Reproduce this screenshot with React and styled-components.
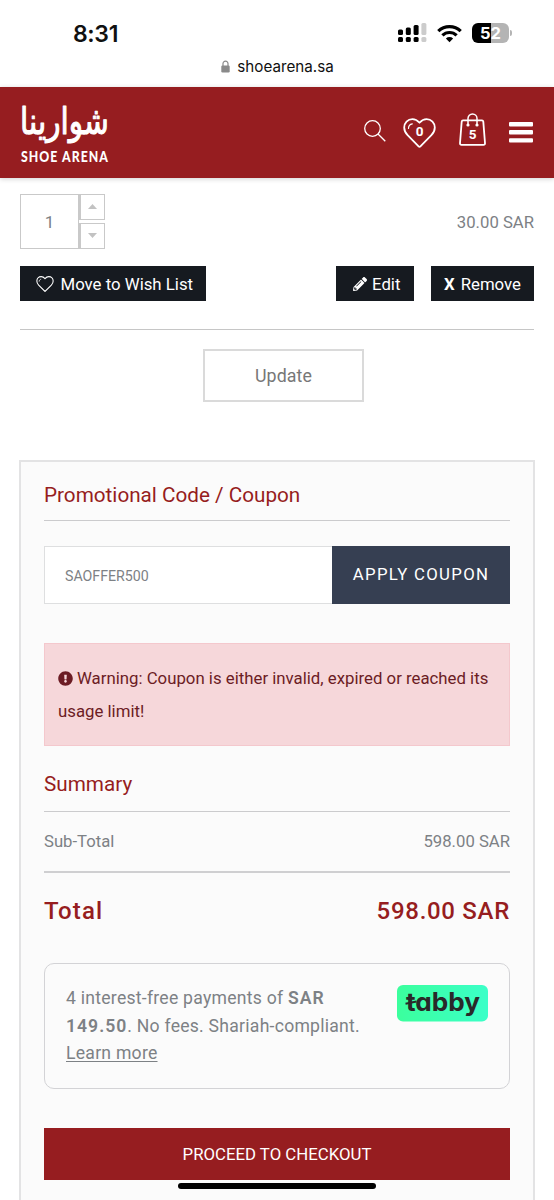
import styled, { createGlobalStyle } from "styled-components";
import { FaPencilAlt, FaExclamationCircle } from "react-icons/fa";

const GlobalStyle = createGlobalStyle`
  * {
    box-sizing: border-box;
  }
  body {
    margin: 0;
    background: #fff;
    font-family: Roboto, "Liberation Sans", sans-serif;
    color: #7d8185;
  }
  button, input {
    font-family: inherit;
    margin: 0;
  }
`;

const Page = styled.div`
  position: relative;
  width: 554px;
  height: 1200px;
  overflow: hidden;
  background: #fff;
`;

/* phone chrome */
const Chrome = styled.div`
  height: 87px;
  font-family: Inter, "Liberation Sans", sans-serif;
  color: #111;
`;
const StatusBar = styled.div`
  display: flex;
  justify-content: space-between;
  align-items: center;
  height: 55px;
  padding: 13px 42px 0 73px;
`;
const Time = styled.div`
  font-size: 23px;
  font-weight: 600;
  letter-spacing: -0.35px;
  line-height: 28px;
`;
const StatusIcons = styled.div`
  display: flex;
  align-items: center;
  gap: 10px;
  margin-top: -2px;
`;
const Battery = styled.div`
  display: flex;
  align-items: center;
  gap: 1px;
`;
const BatteryBody = styled.div`
  width: 37px;
  height: 20px;
  border-radius: 6px;
  background: linear-gradient(90deg, #000 52%, #b4b4b4 52%);
  color: #fff;
  font-size: 16.5px;
  font-weight: 700;
  line-height: 20px;
  text-align: center;
`;
const BatteryTip = styled.div`
  width: 2px;
  height: 6px;
  border-radius: 0 2px 2px 0;
  background: #b4b4b4;
`;
const AddressBar = styled.div`
  display: flex;
  justify-content: center;
  align-items: center;
  gap: 7px;
  height: 22px;
  padding-left: 1px;
  font-size: 15.2px;
`;

/* shop header */
const Header = styled.header`
  display: flex;
  justify-content: space-between;
  height: 91px;
  padding: 0 21px 0 20px;
  background: #961d20;
  box-shadow: 0 1px 5px rgba(0, 0, 0, 0.18);
`;
const HeaderIcons = styled.div`
  display: flex;
  align-items: flex-start;
  padding-top: 26px;
`;
const HeaderIcon = styled.div`
  position: relative;
  width: ${(props) => props.$width}px;
  height: 36px;
  padding-top: ${(props) => props.$top || 0}px;
  margin-left: ${(props) => props.$gap || 0}px;
  svg {
    display: block;
  }
`;
const Count = styled.span`
  position: absolute;
  left: 0;
  right: 0;
  top: ${(props) => props.$top}px;
  color: #fff;
  font-size: 13.5px;
  font-weight: 700;
  line-height: 16px;
  text-align: center;
`;

/* cart item */
const Item = styled.section`
  margin: 0 20px;
  padding-top: 16px;
  border-bottom: 1px solid #c6c6c6;
  height: 152px;
`;
const ItemRow = styled.div`
  display: flex;
  justify-content: space-between;
  align-items: center;
`;
const Quantity = styled.div`
  display: flex;
`;
const QuantityValue = styled.div`
  width: 59px;
  height: 55px;
  border: 1px solid #c9c9c9;
  font-size: 17px;
  line-height: 54px;
  text-align: center;
`;
const Steps = styled.div`
  display: flex;
  flex-direction: column;
  justify-content: space-between;
`;
const Step = styled.button`
  display: flex;
  justify-content: center;
  align-items: center;
  width: 26px;
  height: 26px;
  padding: 0 1px 2px 0;
  border: 1px solid #c9c9c9;
  border-left-width: 2px;
  background: #fff;
`;
const Price = styled.div`
  padding-top: 1px;
  font-size: 16.7px;
`;
const Actions = styled.div`
  display: flex;
  margin-top: 17px;
`;
const DarkButton = styled.button`
  display: flex;
  align-items: center;
  justify-content: flex-start;
  gap: ${(props) => props.$gap}px;
  width: ${(props) => props.$width}px;
  height: 35px;
  margin-left: ${(props) => props.$left || "0"};
  padding: 1px 0 0 ${(props) => props.$inset}px;
  border: 0;
  background: #161a20;
  color: #fff;
  font-size: 16.8px;
  white-space: nowrap;
`;
const UpdateButton = styled.button`
  display: block;
  width: 161px;
  height: 53px;
  margin: 19px auto 0 203px;
  border: 2px solid #dadada;
  background: #fff;
  color: #777;
  font-size: 17.8px;
  letter-spacing: 0.1px;
`;

/* totals card */
const Card = styled.section`
  height: 760px;
  margin: 58px 19px 0 19px;
  padding: 0 23px;
  border: 2px solid #e3e3e4;
  background: #fbfbfb;
`;
const CardTitle = styled.h2`
  margin: 0;
  height: ${(props) => props.$height}px;
  padding-top: ${(props) => props.$top}px;
  border-bottom: 1px solid #cbcbcd;
  color: #961d20;
  font-size: 20.7px;
  font-weight: 400;
  line-height: 24px;
`;
const CouponForm = styled.div`
  display: flex;
  margin-top: 25px;
  height: 58px;
`;
const CouponInput = styled.input`
  width: 288px;
  padding: 2px 20px 0;
  border: 1px solid #dedfe0;
  border-right: 0;
  border-radius: 0;
  outline: 0;
  background: #fff;
  color: #7d8185;
  font-size: 14.2px;
`;
const ApplyButton = styled.button`
  flex: 1;
  padding: 0 0 2px;
  border: 0;
  background: #363f52;
  color: #fff;
  font-size: 16.8px;
  letter-spacing: 1.3px;
`;
const Alert = styled.div`
  height: 103px;
  margin-top: 39px;
  padding: 18px 13px 0;
  border: 1px solid #f4c8cd;
  background: #f6d7da;
  color: #6c1c24;
  font-size: 16.8px;
  line-height: 32.5px;
  white-space: nowrap;
  svg {
    vertical-align: -2px;
    margin-right: 4px;
  }
`;
const TotalRow = styled.div`
  display: flex;
  justify-content: space-between;
  align-items: center;
  height: 61px;
  border-bottom: 2px solid #cfcfd1;
  font-size: 16.7px;
`;
const GrandTotal = styled.div`
  display: flex;
  justify-content: space-between;
  align-items: center;
  height: 76px;
  color: #961d20;
  font-size: 24px;
  font-weight: 500;
  letter-spacing: 0.7px;
  span:first-child {
    letter-spacing: 1.1px;
  }
`;
const Tabby = styled.div`
  display: flex;
  justify-content: space-between;
  height: 126px;
  margin-top: 14px;
  padding: 21px 21px 0 21px;
  border: 1px solid #d3d3d6;
  border-radius: 10px;
`;
const TabbyText = styled.div`
  color: #7d8185;
  font-size: 17.6px;
  letter-spacing: 0.25px;
  line-height: 27.5px;
  white-space: nowrap;
  b {
    font-weight: 600;
    letter-spacing: 1px;
  }
  u {
    text-underline-offset: 2px;
  }
`;
const CheckoutButton = styled.button`
  display: block;
  width: 100%;
  height: 52px;
  margin-top: 39px;
  padding: 0;
  border: 0;
  background: #961d20;
  color: #fff;
  font-size: 16.8px;
`;
const HomeIndicator = styled.div`
  position: absolute;
  left: 178px;
  bottom: 11px;
  width: 198px;
  height: 6px;
  border-radius: 4px;
  background: #000;
`;

const Signal = () => (
  <svg width="29" height="20" viewBox="0 0 29 20">
    <rect x="0" y="6.5" width="5" height="5.5" rx="1.5" />
    <rect x="7.8" y="4.5" width="5" height="7.5" rx="1.5" />
    <rect x="15.6" y="2" width="5" height="10" rx="1.5" />
    <rect x="23.4" y="0" width="5" height="12" rx="1.5" fill="#ccc" />
    <rect x="0" y="14" width="5" height="5" rx="1.5" />
    <rect x="7.8" y="14" width="5" height="5" rx="1.5" />
    <rect x="15.6" y="14" width="5" height="5" rx="1.5" />
    <rect x="23.4" y="14" width="5" height="5" rx="1.5" fill="#ccc" />
  </svg>
);

const Wifi = () => (
  <svg width="25" height="19" viewBox="0 0 25 19" fill="none" stroke="#000" strokeWidth="3.2">
    <path d="M1.3 7.1a16 16 0 0 1 22.4 0" />
    <path d="M5.4 11.4a10.1 10.1 0 0 1 14.2 0" />
    <path d="M12.5 18.2l-3.6-3.7a5.2 5.2 0 0 1 7.2 0z" fill="#000" stroke="none" />
  </svg>
);

const Lock = () => (
  <svg width="9" height="13" viewBox="0 0 9 13">
    <rect x="0.3" y="5.5" width="8.4" height="7" rx="1.2" fill="#8a8a8a" />
    <path d="M2 6V3.6a2.5 2.5 0 0 1 5 0V6" fill="none" stroke="#8a8a8a" strokeWidth="1.2" />
  </svg>
);

const Logo = () => (
  <svg width="120" height="91" viewBox="0 0 120 91" fill="#fff">
    <text
      transform="translate(0 46.5) scale(0.95 1.1)"
      fontFamily="'DejaVu Sans', sans-serif"
      fontSize="34"
      textLength="93.5"
      lengthAdjust="spacingAndGlyphs"
      stroke="#fff"
      strokeWidth="1"
      strokeLinejoin="round"
    >
      شوارينا
    </text>
    <text
      transform="translate(1 74.5) scale(0.82 1)"
      textLength="106"
      lengthAdjust="spacing"
      fontFamily="Lato, sans-serif"
      fontSize="15"
      fontWeight="900"
    >
      SHOE ARENA
    </text>
  </svg>
);

const Search = () => (
  <svg width="22" height="22" viewBox="0 0 22 22" fill="none" stroke="#fff" strokeWidth="1.3">
    <circle cx="8.5" cy="8.5" r="7.8" />
    <path d="M14 14l7.3 7.3" />
  </svg>
);

const BigHeart = () => (
  <svg width="33" height="31" viewBox="0 0 33 31" fill="none" stroke="#fff" strokeLinecap="round" strokeLinejoin="round">
    <path
      d="M16.5 4.7C14.3 2.3 12 1.2 9.4 1.2 4.7 1.2 1.2 4.8 1.2 9.5c0 3 1.2 5.4 3.4 7.7l11 11.2c.6.6 1.2.6 1.8 0l11-11.2c2.2-2.3 3.4-4.7 3.4-7.7 0-4.7-3.5-8.3-8.2-8.3-2.6 0-4.9 1.1-7.1 3.5z"
      strokeWidth="1.8"
    />
    <path d="M5.5 10.5c0-2.6 1.6-4.2 3.8-4.6" strokeWidth="1.2" />
  </svg>
);

const Bag = () => (
  <svg width="27" height="33" viewBox="0 0 27 33" fill="none" stroke="#fff" strokeWidth="1.8" strokeLinejoin="round">
    <path d="M4 7.4h19c.8 0 1.2.5 1.3 1.2L26 30c.1 1.1-.5 1.8-1.5 1.8h-22C1.5 31.8.9 31.1 1 30L2.7 8.6C2.8 7.9 3.2 7.4 4 7.4z" />
    <path d="M9 11.5V5.5a4.5 4.5 0 0 1 9 0v6" strokeWidth="1.5" />
    <circle cx="9" cy="12" r="1.6" fill="#fff" stroke="none" />
    <circle cx="18" cy="12" r="1.6" fill="#fff" stroke="none" />
  </svg>
);

const Menu = () => (
  <svg width="24" height="21" viewBox="0 0 24 21" fill="#fff">
    <rect width="24" height="4.4" rx="1" />
    <rect y="8.1" width="24" height="4.4" rx="1" />
    <rect y="16.2" width="24" height="4.4" rx="1" />
  </svg>
);

const SmallHeart = () => (
  <svg width="18" height="16" viewBox="0 0 33 30" fill="none" stroke="#fff" strokeWidth="2">
    <path d="M16.5 5C14.3 2.3 12 1.2 9.4 1.2 4.7 1.2 1.2 4.8 1.2 9.5c0 3 1.2 5.4 3.4 7.7l11.9 11.8 11.9-11.8c2.2-2.3 3.4-4.7 3.4-7.7 0-4.7-3.5-8.3-8.2-8.3-2.6 0-4.9 1.1-7.1 3.8z" />
    <path d="M5.5 10.5c0-2.6 1.6-4.2 3.8-4.6" strokeWidth="1.5" />
  </svg>
);

const TabbyLogo = () => (
  <svg width="91" height="37" viewBox="0 0 91 37">
    <defs>
      <linearGradient id="tabby">
        <stop offset="0" stopColor="#3bff9d" />
        <stop offset="1" stopColor="#3bffc8" />
      </linearGradient>
    </defs>
    <rect width="91" height="36.5" rx="6" fill="url(#tabby)" />
    <text
      x="9"
      y="25.5"
      textLength="74"
      lengthAdjust="spacingAndGlyphs"
      fontFamily="Inter, sans-serif"
      fontSize="25"
      fontWeight="700"
      fill="#292929"
      style={{ fontFeatureSettings: '"cv11"' }}
    >
      tabby
    </text>
    <path d="M8.5 18.8l11-2.2" stroke="#292929" strokeWidth="2" />
  </svg>
);

const App = () => {
  return (
    <>
      <GlobalStyle />
      <Page>
        <Chrome>
          <StatusBar>
            <Time>8:31</Time>
            <StatusIcons>
              <Signal />
              <Wifi />
              <Battery>
                <BatteryBody>52</BatteryBody>
                <BatteryTip />
              </Battery>
            </StatusIcons>
          </StatusBar>
          <AddressBar>
            <Lock />
            shoearena.sa
          </AddressBar>
        </Chrome>
        <Header>
          <Logo />
          <HeaderIcons>
            <HeaderIcon $width={22} $top={7}>
              <Search />
            </HeaderIcon>
            <HeaderIcon $width={33} $gap={17} $top={5}>
              <BigHeart />
              <Count $top={10}>0</Count>
            </HeaderIcon>
            <HeaderIcon $width={27} $gap={23}>
              <Bag />
              <Count $top={13}>5</Count>
            </HeaderIcon>
            <HeaderIcon $width={24} $gap={23} $top={9}>
              <Menu />
            </HeaderIcon>
          </HeaderIcons>
        </Header>
        <Item>
          <ItemRow>
            <Quantity>
              <QuantityValue>1</QuantityValue>
              <Steps>
                <Step>
                  <svg width="9" height="5" fill="#c2c2c2">
                    <path d="M0 5l4.5-5 4.5 5z" />
                  </svg>
                </Step>
                <Step>
                  <svg width="9" height="5" fill="#c2c2c2">
                    <path d="M0 0l4.5 5 4.5-5z" />
                  </svg>
                </Step>
              </Steps>
            </Quantity>
            <Price>30.00 SAR</Price>
          </ItemRow>
          <Actions>
            <DarkButton $width={186} $gap={7} $inset={15.5}>
              <SmallHeart />
              Move to Wish List
            </DarkButton>
            <DarkButton $width={78} $gap={5} $inset={17} $left="auto">
              <FaPencilAlt size={14} />
              Edit
            </DarkButton>
            <DarkButton $width={103} $gap={6} $inset={13} $left="17px">
              <b>X</b>
              Remove
            </DarkButton>
          </Actions>
        </Item>
        <UpdateButton>Update</UpdateButton>
        <Card>
          <CardTitle $height={59} $top={21}>
            Promotional Code / Coupon
          </CardTitle>
          <CouponForm>
            <CouponInput defaultValue="SAOFFER500" />
            <ApplyButton>APPLY COUPON</ApplyButton>
          </CouponForm>
          <Alert>
            <FaExclamationCircle size={15} />
            Warning: Coupon is either invalid, expired or reached its
            <br />
            usage limit!
          </Alert>
          <CardTitle $height={66} $top={26}>
            Summary
          </CardTitle>
          <TotalRow>
            <span>Sub-Total</span>
            <span>598.00 SAR</span>
          </TotalRow>
          <GrandTotal>
            <span>Total</span>
            <span>598.00 SAR</span>
          </GrandTotal>
          <Tabby>
            <TabbyText>
              4 interest-free payments of <b>SAR</b>
              <br />
              <b>149.50</b>. No fees. Shariah-compliant.
              <br />
              <u>Learn more</u>
            </TabbyText>
            <TabbyLogo />
          </Tabby>
          <CheckoutButton>PROCEED TO CHECKOUT</CheckoutButton>
        </Card>
        <HomeIndicator />
      </Page>
    </>
  );
};

export default App;
